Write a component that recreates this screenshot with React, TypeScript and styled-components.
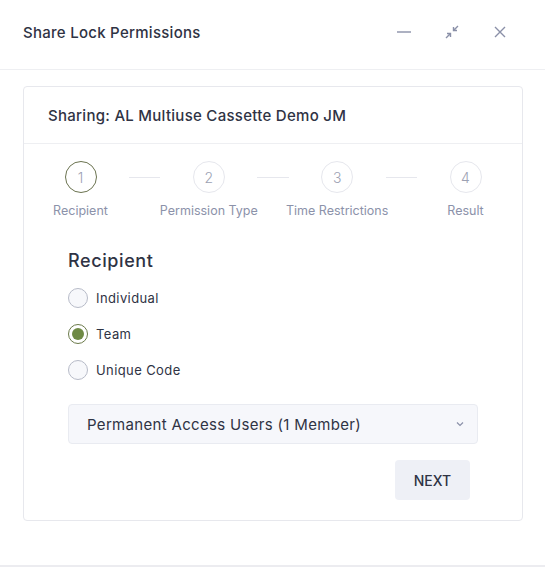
import React, { useState } from "react";
import styled, { createGlobalStyle } from "styled-components";

const Global = createGlobalStyle`
  html, body { margin: 0; padding: 0; background: #fff; }
  body { font-family: Inter, "Noto Sans", sans-serif; color: #2f3344; }
  * { box-sizing: border-box; }
`;

const Page = styled.div`
  width: 545px;
  height: 567px;
  display: flex;
  flex-direction: column;
  border-bottom: 2px solid #ececf0;
`;

const Header = styled.div`
  height: 70px;
  flex: none;
  display: flex;
  align-items: center;
  padding: 0 36px 0 23px;
  border-bottom: 1px solid #eeeff2;
`;

const Title = styled.div`
  flex: 1;
  font-size: 15px;
  font-weight: 450;
  letter-spacing: 0.27px;
  color: #2f3344;
  margin-top: -5px;
`;

const HeaderIcons = styled.div`
  display: flex;
  align-items: center;
  gap: 29px;
  margin-top: -5px;
`;

const IconBtn = styled.div`
  width: 19px;
  height: 19px;
  display: flex;
  align-items: center;
  justify-content: center;
  color: #8a90a8;
`;

const Body = styled.div`
  padding: 16px 22px 0 23px;
`;

const Card = styled.div`
  border: 1px solid #e7e8ed;
  border-radius: 4px;
  height: 435px;
  display: flex;
  flex-direction: column;
`;

const CardHeader = styled.div`
  height: 57px;
  display: flex;
  align-items: center;
  padding: 0 24px;
  font-size: 15px;
  font-weight: 450;
  letter-spacing: 0.28px;
  color: #2f3344;
  border-bottom: 1px solid #eeeff2;
`;

const CardBody = styled.div`
  padding: 17px 44px 0 26px;
  display: flex;
  flex-direction: column;
`;

const Stepper = styled.div`
  display: grid;
  grid-template-columns: 61px 1fr 61px 1fr 61px 1fr 61px;
  align-items: start;
  width: 446px;
`;

const Step = styled.div`
  display: flex;
  flex-direction: column;
  align-items: center;
  width: 61px;
`;

const StepCircle = styled.div<{ $active?: boolean }>`
  width: 32px;
  height: 32px;
  border-radius: 50%;
  border: ${(p) => (p.$active ? "1.5px solid #6b7350" : "1px solid #e6e7ed")};
  color: #9ca1b3;
  font-size: 14px;
  display: flex;
  align-items: center;
  justify-content: center;
  font-weight: 300;
`;

const StepLabel = styled.div`
  margin-top: 10px;
  font-size: 12.5px;
  color: #8c92aa;
  white-space: nowrap;
`;

const Connector = styled.div`
  height: 1px;
  background: #e6e7ed;
  margin: 15.5px 18px 0;
`;

const Section = styled.div`
  padding: 32px 0 0 18px;
`;

const SectionTitle = styled.div`
  font-size: 18px;
  font-weight: 450;
  letter-spacing: 0.6px;
  color: #2f3344;
  margin-bottom: 17px;
`;

const RadioList = styled.div`
  display: flex;
  flex-direction: column;
  gap: 16px;
`;

const RadioRow = styled.label`
  display: flex;
  align-items: center;
  gap: 8px;
  font-size: 13px;
  letter-spacing: 0.4px;
  color: #2f3344;
  cursor: pointer;
  height: 20px;
`;

const RadioDot = styled.span<{ $checked?: boolean }>`
  width: 20px;
  height: 20px;
  border-radius: 50%;
  border: 1px solid ${(p) => (p.$checked ? "#6b7a4a" : "#b7bbc8")};
  background: ${(p) => (p.$checked ? "#fff" : "#f7f8fb")};
  display: flex;
  align-items: center;
  justify-content: center;
  &::after {
    content: "";
    width: 12px;
    height: 12px;
    border-radius: 50%;
    background: #6f8a45;
    display: ${(p) => (p.$checked ? "block" : "none")};
  }
`;

const Select = styled.div`
  margin-top: 24px;
  height: 40px;
  width: 410px;
  background: #f6f7fb;
  border: 1px solid #e9ebf1;
  border-radius: 4px;
  display: flex;
  align-items: center;
  padding: 0 12px 0 18px;
  font-size: 15px;
  letter-spacing: 0.32px;
  color: #2f3344;
  justify-content: space-between;
`;

const Actions = styled.div`
  display: flex;
  justify-content: flex-end;
  width: 402px;
  margin-top: 16px;
`;

const NextButton = styled.button`
  width: 75px;
  height: 40px;
  border: none;
  border-radius: 4px;
  background: #eef0f6;
  color: #2f3344;
  font-family: inherit;
  font-size: 14px;
  font-weight: 450;
`;

const steps = ["Recipient", "Permission Type", "Time Restrictions", "Result"];
const options = ["Individual", "Team", "Unique Code"];

export default function App() {
  const [sel, setSel] = useState("Team");
  return (
    <Page>
      <Global />
      <Header>
        <Title>Share Lock Permissions</Title>
        <HeaderIcons>
          <IconBtn>
            <svg width="16" height="16" viewBox="0 0 16 16">
              <path d="M1 8h14" stroke="currentColor" strokeWidth="1.4" />
            </svg>
          </IconBtn>
          <IconBtn>
            <svg width="16" height="16" viewBox="0 0 16 16" fill="none" stroke="currentColor" strokeWidth="1.4">
              <path d="M14 2l-4.5 4.5M9.5 3v3.5H13" />
              <path d="M2 14l4.5-4.5M6.5 13V9.5H3" />
            </svg>
          </IconBtn>
          <IconBtn>
            <svg width="14" height="14" viewBox="0 0 14 14" fill="none" stroke="currentColor" strokeWidth="1.4">
              <path d="M2 2l10 10M12 2L2 12" />
            </svg>
          </IconBtn>
        </HeaderIcons>
      </Header>
      <Body>
        <Card>
          <CardHeader>Sharing: AL Multiuse Cassette Demo JM</CardHeader>
          <CardBody>
            <Stepper>
              {steps.map((s, i) => (
                <React.Fragment key={s}>
                  {i > 0 && <Connector />}
                  <Step>
                    <StepCircle $active={i === 0}>{i + 1}</StepCircle>
                    <StepLabel>{s}</StepLabel>
                  </Step>
                </React.Fragment>
              ))}
            </Stepper>
            <Section>
              <SectionTitle>Recipient</SectionTitle>
              <RadioList>
                {options.map((o) => (
                  <RadioRow key={o} onClick={() => setSel(o)}>
                    <RadioDot $checked={sel === o} />
                    {o}
                  </RadioRow>
                ))}
              </RadioList>
              <Select>
                <span>Permanent Access Users (1 Member)</span>
                <svg width="10" height="10" viewBox="0 0 10 10" fill="none" stroke="#8a90a8" strokeWidth="1.2">
                  <path d="M2 3.5l3 3 3-3" />
                </svg>
              </Select>
              <Actions>
                <NextButton>NEXT</NextButton>
              </Actions>
            </Section>
          </CardBody>
        </Card>
      </Body>
    </Page>
  );
}
